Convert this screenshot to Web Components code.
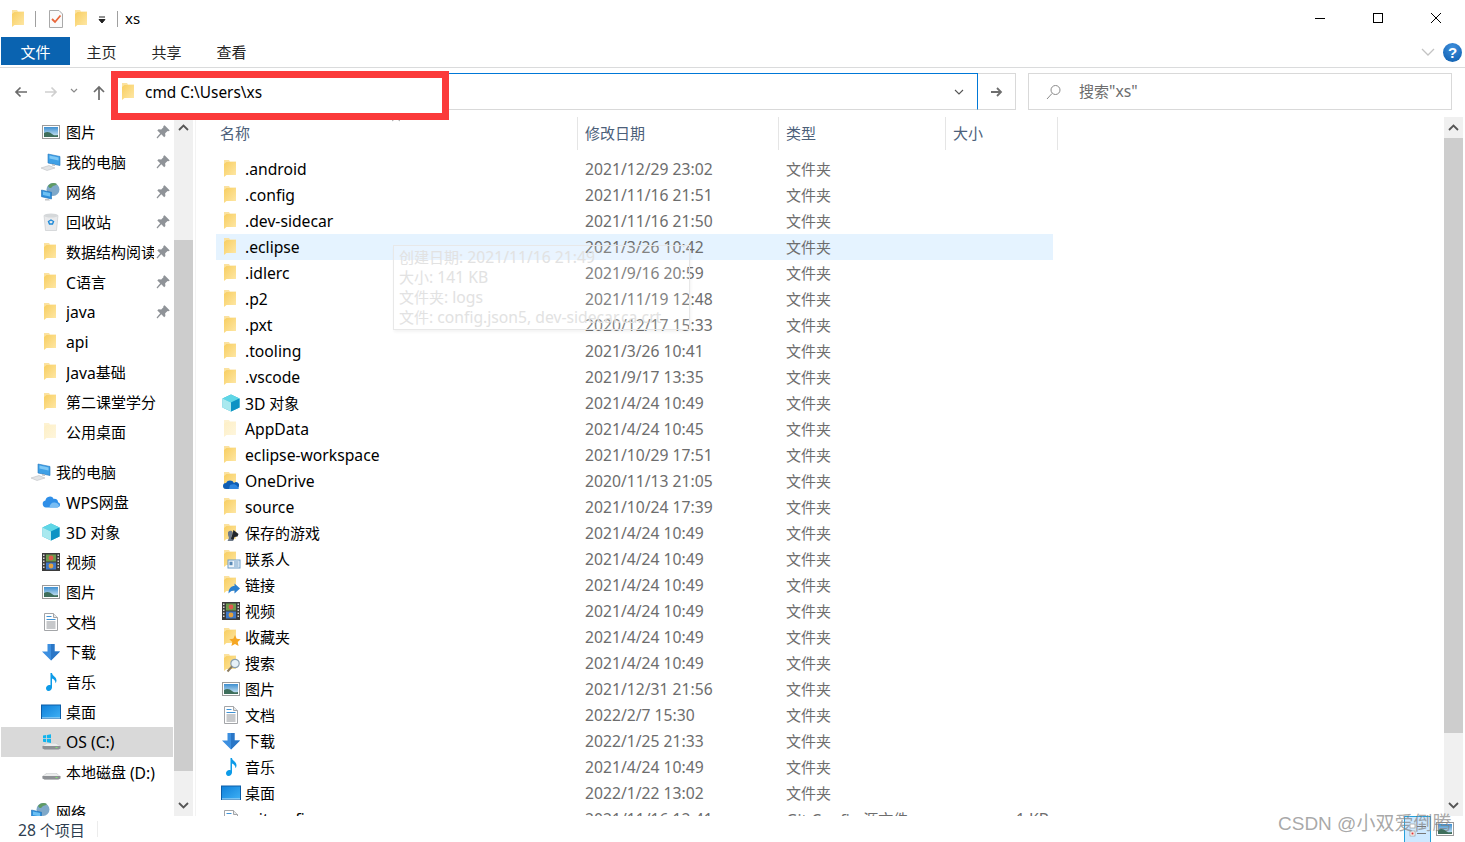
<!DOCTYPE html>
<html lang="zh">
<head>
<meta charset="utf-8">
<title>xs</title>
<style>
  html, body { margin: 0; height: 100%; overflow: hidden; background: #fff; }
  body { font: 15px "Noto Sans", "Noto Sans CJK SC", sans-serif; color: #000; }
</style>
</head>
<body>
<x-explorer></x-explorer>

<script>
// latin runs look a bit bigger than the cjk ones in the screenshot, and sit a pixel lower in the lists
const latin = (s, size = 15.7, drop = 1) => s.replace(/[\x21-\x7e]+( [\x21-\x7e]+)*/g, m => `<span style="font-size:${size}px;line-height:1;vertical-align:${-drop}px">${m}</span>`);

// icons, all on a 20x20 box
const folderBody = (a = '#f8ce60', b = '#fee8a8', back = '#fbe2a0') => `
  <defs><linearGradient id="fg" x1="0" y1="0" x2="1" y2="1"><stop offset="0" stop-color="${a}"/><stop offset="1" stop-color="${b}"/></linearGradient></defs>
  <path d="M3 1h5l1 1.500h6V16H3z" fill="${back}"/>
  <path d="M5.500 3H15v13H5.500L3 18V5z" fill="url(#fg)"/>`;
const picture = `
  <defs><linearGradient id="sky" x1="0" y1="0" x2="0" y2="1"><stop offset="0" stop-color="#3e8fd0"/><stop offset="1" stop-color="#d7ecf5"/></linearGradient></defs>
  <rect x="1.500" y="3.500" width="17" height="13" fill="#fff" stroke="#9b9b9b"/>
  <rect x="3" y="5" width="14" height="10" fill="url(#sky)"/>
  <path d="M3 11c3-2 6-1 8 1s4 1 6 1v2H3z" fill="#3f6f5c"/>`;
const monitor = `
  <path d="M7 2l12 2.500v9L7 11z" fill="#3fa0e6" stroke="#2376bd" stroke-width=".6"/>
  <path d="M8.500 3.500l9 2v3l-9-2z" fill="#7fc8f5"/>
  <path d="M11 12l3 .6v1.400l-3-.6z" fill="#b9bcc0"/>
  <path d="M0 16l8-2.500 6 2.500-8 2.500z" fill="#e3e4e6" stroke="#b5b7ba" stroke-width=".5"/>`;
const drive = `
  <path d="M1.500 14l4-3h10l3.500 3v2.500l-2 1H3.500l-2-1z" fill="#cfd1d3"/>
  <path d="M1.500 14h18v2.500l-2 1H3.500l-2-1z" fill="#8d9094"/>
  <path d="M2.500 14l3.500-2.500h9l3.500 2.500z" fill="#eceded"/>
  <rect x="14.500" y="15" width="2" height="1" fill="#7ee36f"/>`;
const ICONS = {
  folder: folderBody(),
  pale: folderBody('#fdefc6', '#fef6de', '#fdf2d2'),
  picture, monitor, drive,
  network: `
    <circle cx="12" cy="7.500" r="6.500" fill="#7fa8c9"/><path d="M7 4c2-3 6-4 9-2-1 2-4 1-5 3s-3 1-4-1z" fill="#5f9a63"/>
    <path d="M.500 8l10 2.300V17L.500 14.700z" fill="#2d8fdc" stroke="#1f6eb3" stroke-width=".6"/>
    <path d="M2 9.500l7 1.600v3.400l-7-1.600z" fill="#6cc0f3"/><path d="M4 17h4l1 1.500H4z" fill="#c2c4c6"/>`,
  bin: `
    <path d="M3 3.500h14l-1.500 15h-11z" fill="#e9eaec" stroke="#c3c6c9" stroke-width=".6"/>
    <ellipse cx="10" cy="3.500" rx="7" ry="2" fill="#d5d8da"/>
    <path d="M10 8l2.500 1.500-1 2.500h-3l-1-2.500z" fill="none" stroke="#1f8ad8" stroke-width="1.400"/>`,
  pin: `<path d="M12 1.500l6.500 6.500-1.800 1.200-1-.6-3 3 .3 3.400-1.500 1.500-3.600-3.600L3 18l-1-1 4.500-5.400L2.900 8l1.500-1.500 3.400.3 3-3-.6-1z" fill="#8f9398"/>`,
  cloud: `
    <path d="M5 15.500a3.500 3.500 0 0 1-.6-6.900 4.500 4.500 0 0 1 8.400-1.700 4 4 0 0 1 4.300 3.300 2.700 2.700 0 0 1-.6 5.300z" fill="#2f8fe8"/>
    <path d="M8.500 15.500c0-3 2-5 4.500-5s5 1.500 5 3c0 1.300-1 2-2 2z" fill="#79bdf3"/>`,
  cube: `
    <path d="M10 1.500l8.500 4v9L10 18.500l-8.500-4v-9z" fill="#2cb4cf"/>
    <path d="M10 1.500l8.500 4L10 9.500l-8.500-4z" fill="#5fd6e6"/>
    <path d="M1.500 5.500l8.500 4v9l-8.500-4z" fill="#a9e9ef"/>
    <path d="M18.500 5.500v9L10 18.500v-9z" fill="#0e93c4"/>`,
  video: `
    <rect x="1" y="1" width="18" height="18" fill="#3b3b3b"/>
    <path d="M2 2.500h1.500V4H2zM2 5.500h1.500V7H2zM2 8.500h1.500V10H2zM2 11.500h1.500V13H2zM2 14.500h1.500V16H2zM16.500 2.500H18V4h-1.500zM16.500 5.500H18V7h-1.500zM16.500 8.500H18V10h-1.500zM16.500 11.500H18V13h-1.500zM16.500 14.500H18V16h-1.500z" fill="#d8d8d8"/>
    <rect x="5" y="2.500" width="10" height="7" fill="#6c9a4e"/><rect x="5" y="10.500" width="10" height="7" fill="#3e78c8"/>
    <circle cx="10" cy="6" r="2.400" fill="#e2574c"/><circle cx="10" cy="14" r="2.400" fill="#e6a23c"/>`,
  doc: `
    <path d="M3.500 1.500h9l4 4v13h-13z" fill="#fff" stroke="#a3a5a8"/>
    <path d="M12.500 1.500v4h4" fill="#e6e7e8" stroke="#a3a5a8"/>
    <path d="M5.500 4.500h5M5.500 7.500h9" stroke="#3f93d6"/><path d="M5.500 10h9M5.500 12h9M5.500 14h9M5.500 16h9" stroke="#8e9297"/>`,
  down: `<path d="M6.500 2h7v7.500H19L10 18.500 1 9.500h5.500z" fill="#3c8fe0"/><path d="M10 2h3.500v7.500H19L10 18.500z" fill="#2a76c6"/>`,
  music: `<path d="M9.500 1h1.500c.3 3 4.500 3.500 4.500 7.500 0 1-.4 2-1 2.800.2-2.700-2-4.300-3.500-4.800V15.500c0 1.900-1.700 3.500-3.500 3.500S5 17.500 5 16s1.700-3 3.200-3c.5 0 1 .1 1.300.3z" fill="#0d9be8"/>`,
  desktop: `
    <defs><linearGradient id="dk" x1="0" y1="0" x2="1" y2="1"><stop offset="0" stop-color="#0e7fd9"/><stop offset="1" stop-color="#3fb1f5"/></linearGradient></defs>
    <rect x=".5" y="3" width="19" height="13.500" fill="url(#dk)" stroke="#0d5ea8"/><path d="M1 15.500h18v1H1z" fill="#bfe3f8"/>`,
  osdrive: drive + `<path d="M2 3.500l3.200-.5v3.200H2zM6 2.900L10 2.300v3.900H6zM2 7h3.200v3.200L2 9.700zM6 7h4v3.900l-4-.6z" fill="#11b4ee"/>`,
  onedrive: folderBody() + `<path d="M5 18a3 3 0 0 1 0-6 4.500 4.500 0 0 1 8 0 3 3 0 0 1 5 3c0 2-1.500 3-3 3z" fill="#0f5db3"/><path d="M9 14c2-1 6-1 7 1l2 3H8z" fill="#2f85de"/>`,
  games: folderBody() + `<path d="M7 9c2-2 4-1.500 4.500 0 .5 1.500 0 3-1 4l1 2.500 1 2.500H6.500L8 15l-1-3z" fill="#6e7b8a"/><path d="M12.500 7l5 4-1 2.500-3 .5-1 3-2.500-1z" fill="#22262b"/>`,
  contacts: folderBody() + `<rect x="7" y="11" width="12" height="8" fill="#eef5fb" stroke="#6d9cc6"/><rect x="8.500" y="12.700" width="3" height="3.500" fill="#5a8ab6"/><path d="M13 13h4.500M13 15h4.500M13 17h4.500" stroke="#6d9cc6"/>`,
  links: folderBody() + `<path d="M7.500 18.500c0-5 2.500-7.500 6-7.500V8.500l5.500 5-5.500 5V15.500c-2 0-4 .6-6 3z" fill="#2a7fd0"/>`,
  favorites: folderBody() + `<path d="M14 8l1.700 3.800 4 .4-3 2.800.9 4-3.600-2.100L10.400 19l.9-4-3-2.800 4-.4z" fill="#f5a623"/>`,
  search: folderBody() + `<circle cx="14" cy="10.500" r="4.200" fill="#e6f1f8" stroke="#8ba0b0" stroke-width="1.200"/><path d="M11 13.500L6.500 18.500" stroke="#8a7a5e" stroke-width="2"/>`,
  note: `<path d="M3.500 1.500h9.500l3.500 3.500v13.500h-13z" fill="#fafafa" stroke="#a9a9a9"/><path d="M6 10l3 3 5.500-6.500" fill="none" stroke="#e8663a" stroke-width="1.800"/>`
};

class XIcon extends HTMLElement {
  connectedCallback() {
    const size = this.getAttribute('size') || 20;
    this.attachShadow({ mode: 'open' });
    this.shadowRoot.innerHTML = `
      <style>:host { display: inline-flex; flex: none; width: ${size}px; height: ${size}px; } svg { display: block; }</style>
      <svg width="${size}" height="${size}" viewBox="0 0 20 20">${ICONS[this.getAttribute('name')] || ''}</svg>`;
  }
}

class XTitlebar extends HTMLElement {
  connectedCallback() {
    this.attachShadow({ mode: 'open' });
    this.shadowRoot.innerHTML = `
      <style>
        :host { display: flex; align-items: center; height: 37px; padding-left: 9px; }
        .sep { width: 1px; height: 16px; background: #a0a0a0; }
        .caret { width: 20px; display: flex; justify-content: center; }
        .name { margin-left: 7px; padding-bottom: 2px; }
        .ctl { margin-left: auto; display: flex; }
        .ctl svg { display: block; width: 58px; height: 37px; }
      </style>
      <x-icon name="folder"></x-icon>
      <span class="sep" style="margin:0 10px 0 6px"></span>
      <x-icon name="note"></x-icon>
      <x-icon name="folder" style="margin-left:6px"></x-icon>
      <span class="caret"><svg width="8" height="8" viewBox="0 0 8 8" style="margin-top:2px"><path d="M1 1h6M1 3.500h6L4 7z" stroke="#222" fill="#222" stroke-width="1"/></svg></span>
      <span class="sep" style="margin-left:5px"></span>
      <span class="name">xs</span>
      <span class="ctl">
        <svg viewBox="0 0 58 37"><path d="M24 18.500h10" stroke="#000"/></svg>
        <svg viewBox="0 0 58 37"><rect x="24.500" y="13.500" width="9" height="9" fill="none" stroke="#000"/></svg>
        <svg viewBox="0 0 58 37"><path d="M24 13l10 10M34 13L24 23" stroke="#000"/></svg>
      </span>`;
  }
}

class XTab extends HTMLElement {
  connectedCallback() {
    this.attachShadow({ mode: 'open' });
    this.shadowRoot.innerHTML = `
      <style>
        :host { display: flex; align-items: center; justify-content: center; width: 65px; height: 28px; font-size: 15px; color: #262626; }
        :host([active]) { width: 69px; margin-right: -1px; background: #0a63b0; color: #fff; }
      </style><slot></slot>`;
  }
}

class XRibbon extends HTMLElement {
  connectedCallback() {
    this.attachShadow({ mode: 'open' });
    this.shadowRoot.innerHTML = `
      <style>
        :host { display: flex; align-items: flex-start; height: 30px; padding-left: 1px; border-bottom: 1px solid #dadbdc; }
        .right { margin-left: auto; margin-right: 3px; display: flex; align-items: center; gap: 8px; height: 30px; }
        .help { width: 19px; height: 19px; border-radius: 50%; background: radial-gradient(circle at 50% 25%, #3f8fdc, #0b5cad); color: #fff; font: bold 15px/19px "Liberation Sans", sans-serif; text-align: center; }
      </style>
      <slot></slot>
      <div class="right">
        <svg width="14" height="8" viewBox="0 0 14 8"><path d="M1 1l6 6 6-6" fill="none" stroke="#c3c3c3" stroke-width="1.300"/></svg>
        <div class="help">?</div>
      </div>`;
  }
}

class XAddressBar extends HTMLElement {
  connectedCallback() {
    this.attachShadow({ mode: 'open' });
    this.shadowRoot.innerHTML = `
      <style>
        :host { display: flex; align-items: center; height: 37px; margin-top: 5px; padding: 0 13px 0 0; }
        .nav { width: 111px; display: flex; align-items: center; flex: none; }
        .field { flex: 1; height: 37px; box-sizing: border-box; border: 1px solid #0078d7; border-bottom-color: #d9d9d9; border-left-color: #d9d9d9; display: flex; align-items: center; justify-content: flex-end; padding-right: 13px; }
        .go { width: 38px; height: 37px; box-sizing: border-box; border: 1px solid #d9d9d9; border-left: 0; padding-left: 1px; display: flex; align-items: center; justify-content: center; flex: none; }
        .search { width: 424px; flex: none; height: 37px; margin-left: 12px; box-sizing: border-box; border: 1px solid #d9d9d9; display: flex; align-items: center; padding-left: 16px; gap: 16px; color: #6d6d6d; }
        .search span { padding-bottom: 2px; }
      </style>
      <div class="nav">
        <svg width="14" height="14" viewBox="0 0 14 14" style="margin-left:14px"><path d="M13 7H2M6.500 2.500L2 7l4.500 4.500" fill="none" stroke="#6b6b6b" stroke-width="1.700"/></svg>
        <svg width="14" height="14" viewBox="0 0 14 14" style="margin-left:16px"><path d="M1 7h11M7.500 2.500L12 7l-4.500 4.500" fill="none" stroke="#cfcfcf" stroke-width="1.700"/></svg>
        <svg width="8" height="6" viewBox="0 0 8 6" style="margin-left:12px;margin-bottom:2px"><path d="M1 1l3 3 3-3" fill="none" stroke="#8a8a8a" stroke-width="1.200"/></svg>
        <svg width="14" height="16" viewBox="0 0 14 16" style="margin-left:14px;margin-top:2px"><path d="M7 15V2M2 7l5-5 5 5" fill="none" stroke="#6b6b6b" stroke-width="1.700"/></svg>
      </div>
      <div class="field">
        <svg width="10" height="6" viewBox="0 0 10 6"><path d="M1 1l4 4 4-4" fill="none" stroke="#555" stroke-width="1.100"/></svg>
      </div>
      <div class="go"><svg width="12" height="12" viewBox="0 0 12 12"><path d="M0 6h10M6 2l4 4-4 4" fill="none" stroke="#6e6e6e" stroke-width="1.800"/></svg></div>
      <div class="search">
        <svg width="18" height="18" viewBox="0 0 18 18"><circle cx="10.500" cy="7" r="4.500" fill="none" stroke="#8a8a8a"/><path d="M7 10.500L2 16" stroke="#8a8a8a"/></svg>
        <span>${latin('搜索"xs"', 15.7, 0)}</span>
      </div>`;
  }
}

class XScrollbar extends HTMLElement {
  connectedCallback() {
    const top = this.getAttribute('thumb-top'), height = this.getAttribute('thumb-height');
    this.attachShadow({ mode: 'open' });
    this.shadowRoot.innerHTML = `
      <style>
        :host { display: flex; flex-direction: column; width: 19px; flex: none; background: #f0f0f0; overflow: hidden; }
        .arrow { height: 21px; flex: none; display: flex; align-items: center; justify-content: center; }
        .thumb { background: #cdcdcd; flex: none; }
        .rest { flex: 1; min-height: 0; }
      </style>
      <div class="arrow"><svg width="11" height="7" viewBox="0 0 11 7"><path d="M1 6l4.500-4.500L10 6" fill="none" stroke="#555" stroke-width="1.800"/></svg></div>
      <div class="thumb" style="margin-top:${top}px;height:${height}px"></div>
      <div class="rest"></div>
      <div class="arrow"><svg width="11" height="7" viewBox="0 0 11 7"><path d="M1 1l4.500 4.500L10 1" fill="none" stroke="#555" stroke-width="1.800"/></svg></div>`;
  }
}

class XNavItem extends HTMLElement {
  connectedCallback() {
    const pin = this.hasAttribute('pinned') ? '<x-icon class="pin" name="pin" size="16"></x-icon>' : '';
    this.attachShadow({ mode: 'open' });
    this.shadowRoot.innerHTML = `
      <style>
        :host { display: flex; align-items: center; height: 30px; flex: none; padding-left: 40px; box-sizing: border-box; width: 172px; position: relative; }
        :host([top]) { padding-left: 30px; }
        :host([selected]) { background: #d9d9d9; }
        .label { margin-left: 5px; width: 88px; flex: 1; min-width: 0; padding-bottom: 2px; white-space: nowrap; overflow: hidden; }
        :host([pinned]) .label { flex: none; }
        .pin { position: absolute; left: 154px; top: 7px; }
      </style>
      <x-icon name="${this.getAttribute('icon')}"></x-icon>
      <span class="label"><slot></slot></span>${pin}`;
  }
}

const NAV = [
  ['picture', '图片', 1], ['monitor', '我的电脑', 1], ['network', '网络', 1], ['bin', '回收站', 1],
  ['folder', '数据结构阅读', 1], ['folder', 'C语言', 1], ['folder', 'java', 1], ['folder', 'api'],
  ['folder', 'Java基础'], ['folder', '第二课堂学分'], ['pale', '公用桌面'], null,
  ['monitor', '我的电脑', 0, 'top'], ['cloud', 'WPS网盘'], ['cube', '3D 对象'], ['video', '视频'],
  ['picture', '图片'], ['doc', '文档'], ['down', '下载'], ['music', '音乐'], ['desktop', '桌面'],
  ['osdrive', 'OS (C:)', 0, 'selected'], ['drive', '本地磁盘 (D:)'], null,
  ['network', '网络', 0, 'top']
];

class XNavPane extends HTMLElement {
  connectedCallback() {
    this.attachShadow({ mode: 'open' });
    this.shadowRoot.innerHTML = `
      <style>
        :host { display: flex; width: 196px; flex: none; box-sizing: border-box; border-right: 1px solid #f3f3f3; min-height: 0; overflow: hidden; }
        .list { width: 174px; flex: none; padding-left: 1px; box-sizing: border-box; display: flex; flex-direction: column; overflow: hidden; }
        .gap { height: 10px; flex: none; }
      </style>
      <div class="list"></div>
      <x-scrollbar thumb-top="102" thumb-height="531"></x-scrollbar>`;
    const list = this.shadowRoot.querySelector('.list');
    for (const n of NAV) {
      if (!n) { list.insertAdjacentHTML('beforeend', '<div class="gap"></div>'); continue; }
      const el = document.createElement('x-nav-item');
      el.setAttribute('icon', n[0]);
      if (n[2]) el.setAttribute('pinned', '');
      if (n[3]) el.setAttribute(n[3], '');
      el.innerHTML = latin(n[1]);
      list.appendChild(el);
    }
  }
}

class XFileRow extends HTMLElement {
  connectedCallback() {
    const a = n => this.getAttribute(n) || '';
    this.attachShadow({ mode: 'open' });
    this.shadowRoot.innerHTML = `
      <style>
        :host { display: flex; align-items: center; height: 26px; flex: none; width: 837px; color: #6d6d6d; }
        :host([hot]) { background: #e5f3ff; }
        .name { width: 369px; flex: none; display: flex; align-items: center; gap: 4px; padding-left: 5px; box-sizing: border-box; color: #000; white-space: nowrap; }
        .name b { font-weight: normal; padding-bottom: 2px; }
        .date { width: 201px; flex: none; padding-bottom: 2px; }
        .type { width: 167px; flex: none; white-space: nowrap; padding-bottom: 2px; }
        .size { width: 96px; flex: none; text-align: right; padding-bottom: 2px; }
      </style>
      <span class="name"><x-icon name="${a('icon')}"></x-icon><b><slot></slot></b></span>
      <span class="date">${latin(a('date'))}</span>
      <span class="type">${latin(a('type'))}</span>
      <span class="size">${latin(a('size'))}</span>`;
  }
}

const FILES = [
  ['folder', '.android', '2021/12/29 23:02'], ['folder', '.config', '2021/11/16 21:51'],
  ['folder', '.dev-sidecar', '2021/11/16 21:50'], ['folder', '.eclipse', '2021/3/26 10:42'],
  ['folder', '.idlerc', '2021/9/16 20:59'], ['folder', '.p2', '2021/11/19 12:48'],
  ['folder', '.pxt', '2020/12/17 15:33'], ['folder', '.tooling', '2021/3/26 10:41'],
  ['folder', '.vscode', '2021/9/17 13:35'], ['cube', '3D 对象', '2021/4/24 10:49'],
  ['pale', 'AppData', '2021/4/24 10:45'], ['folder', 'eclipse-workspace', '2021/10/29 17:51'],
  ['onedrive', 'OneDrive', '2020/11/13 21:05'], ['folder', 'source', '2021/10/24 17:39'],
  ['games', '保存的游戏', '2021/4/24 10:49'], ['contacts', '联系人', '2021/4/24 10:49'],
  ['links', '链接', '2021/4/24 10:49'], ['video', '视频', '2021/4/24 10:49'],
  ['favorites', '收藏夹', '2021/4/24 10:49'], ['search', '搜索', '2021/4/24 10:49'],
  ['picture', '图片', '2021/12/31 21:56'], ['doc', '文档', '2022/2/7 15:30'],
  ['down', '下载', '2022/1/25 21:33'], ['music', '音乐', '2021/4/24 10:49'],
  ['desktop', '桌面', '2022/1/22 13:02'],
  ['doc', '.gitconfig', '2021/11/16 12:41', 'Git Config 源文件', '1 KB']
];

class XFileList extends HTMLElement {
  connectedCallback() {
    this.attachShadow({ mode: 'open' });
    this.shadowRoot.innerHTML = `
      <style>
        :host { display: flex; flex-direction: column; flex: 1; min-width: 0; min-height: 0; overflow: hidden; position: relative; }
        .head { display: flex; height: 33px; flex: none; margin-bottom: 6px; color: #4c607a; padding-left: 24px; }
        .head span { box-sizing: border-box; height: 33px; line-height: 32px; border-right: 1px solid #e5e5e5; padding-left: 7px; flex: none; }
        .head span:first-child { padding-left: 0; }
        .rows { flex: 1; min-height: 0; overflow: hidden; display: flex; flex-direction: column; padding-left: 20px; }
        .caret { position: absolute; left: 195px; top: 0; }
      </style>
      <div class="head">
        <span style="width:358px">名称</span><span style="width:201px">修改日期</span>
        <span style="width:167px">类型</span><span style="width:112px">大小</span>
      </div>
      <div class="rows"></div>
      <svg class="caret" width="10" height="5" viewBox="0 0 10 5"><path d="M1 4l4-3 4 3" fill="none" stroke="#aaa"/></svg>`;
    const rows = this.shadowRoot.querySelector('.rows');
    for (const f of FILES) {
      const el = document.createElement('x-file-row');
      el.setAttribute('icon', f[0]);
      el.setAttribute('date', f[2]);
      el.setAttribute('type', f[3] || '文件夹');
      if (f[4]) el.setAttribute('size', f[4]);
      if (f[1] === '.eclipse') el.setAttribute('hot', '');
      el.innerHTML = latin(f[1]);
      rows.appendChild(el);
    }
  }
}

class XStatusbar extends HTMLElement {
  connectedCallback() {
    this.attachShadow({ mode: 'open' });
    this.shadowRoot.innerHTML = `
      <style>
        :host { display: flex; align-items: center; height: 26px; flex: none; padding-left: 18px; color: #2d3e50; }
        .sep { width: 1px; height: 16px; background: #ececec; margin-left: 12px; }
        .views { margin-left: auto; margin-right: 10px; display: flex; align-items: center; gap: 4px; height: 26px; }
        .on { width: 27px; height: 26px; box-sizing: border-box; border: 1px solid #26a0da; border-bottom: 0; background: #cde8ff; display: flex; align-items: center; justify-content: center; }
      </style>
      <span class="count">${latin('28 个项目', 15.7, 0)}</span><span class="sep"></span>
      <div class="views">
        <div class="on"><svg width="18" height="18" viewBox="0 0 18 18"><rect x="1" y="3" width="5" height="4" fill="#fff" stroke="#999" stroke-width=".7"/><rect x="1" y="10" width="5" height="5" fill="#fff" stroke="#999" stroke-width=".7"/><rect x="2.500" y="11.500" width="2" height="2" fill="#d33"/><path d="M8 5.500h9M8 12.500h9" stroke="#777"/></svg></div>
        <x-icon name="picture" size="20"></x-icon>
      </div>`;
  }
}

class XTooltip extends HTMLElement {
  connectedCallback() {
    this.attachShadow({ mode: 'open' });
    this.shadowRoot.innerHTML = `
      <style>
        :host { position: absolute; left: 393px; top: 245px; width: 297px; height: 85px; box-sizing: border-box; border: 1px solid #e8e8e8; box-shadow: 1px 2px 3px rgba(0,0,0,.05); background: rgba(255,255,255,.15); color: #e2e2e2; padding: 1px 5px 0; line-height: 20px; white-space: nowrap; }
      </style><slot></slot>`;
  }
}

class XHighlight extends HTMLElement {
  connectedCallback() {
    this.attachShadow({ mode: 'open' });
    this.shadowRoot.innerHTML = `
      <style>
        :host { position: absolute; left: 111px; top: 71px; width: 338px; height: 49px; box-sizing: border-box; border: 7px solid #fb3a3a; background: #fff; display: flex; align-items: center; padding: 0 0 7px 1px; gap: 6px; }
      </style>
      <x-icon name="folder"></x-icon><span><slot></slot></span>`;
  }
}

const TIP = ['创建日期: 2021/11/16 21:49', '大小: 141 KB', '文件夹: logs', '文件: config.json5, dev-sidecar.ca.crt'];

class XExplorer extends HTMLElement {
  connectedCallback() {
    this.attachShadow({ mode: 'open' });
    this.shadowRoot.innerHTML = `
      <style>
        :host { display: flex; flex-direction: column; width: 1465px; height: 842px; position: relative; overflow: hidden; }
        .body { flex: 1; min-height: 0; display: flex; margin-top: 7px; }
        .mark { position: absolute; left: 1278px; top: 808px; font: 19px "Liberation Sans", "Noto Sans CJK SC", sans-serif; color: rgba(130,130,130,.7); white-space: nowrap; }
        .main-bar { margin-right: 2px; }
      </style>
      <x-titlebar></x-titlebar>
      <x-ribbon>
        <x-tab active>文件</x-tab><x-tab>主页</x-tab><x-tab>共享</x-tab><x-tab>查看</x-tab>
      </x-ribbon>
      <x-address-bar></x-address-bar>
      <div class="body">
        <x-nav-pane></x-nav-pane>
        <x-file-list></x-file-list>
        <x-scrollbar class="main-bar" thumb-top="0" thumb-height="595"></x-scrollbar>
      </div>
      <x-statusbar></x-statusbar>
      <x-tooltip>${TIP.map(t => latin(t, 15.7, 0)).join('<br>')}</x-tooltip>
      <x-highlight>${latin('cmd C:\\Users\\xs', 15.4, 0)}</x-highlight>
      <div class="mark">CSDN @小双爱倒腾</div>`;
  }
}

customElements.define('x-icon', XIcon);
customElements.define('x-titlebar', XTitlebar);
customElements.define('x-tab', XTab);
customElements.define('x-ribbon', XRibbon);
customElements.define('x-address-bar', XAddressBar);
customElements.define('x-scrollbar', XScrollbar);
customElements.define('x-nav-item', XNavItem);
customElements.define('x-nav-pane', XNavPane);
customElements.define('x-file-row', XFileRow);
customElements.define('x-file-list', XFileList);
customElements.define('x-statusbar', XStatusbar);
customElements.define('x-tooltip', XTooltip);
customElements.define('x-highlight', XHighlight);
customElements.define('x-explorer', XExplorer);
</script>
</body>
</html>
